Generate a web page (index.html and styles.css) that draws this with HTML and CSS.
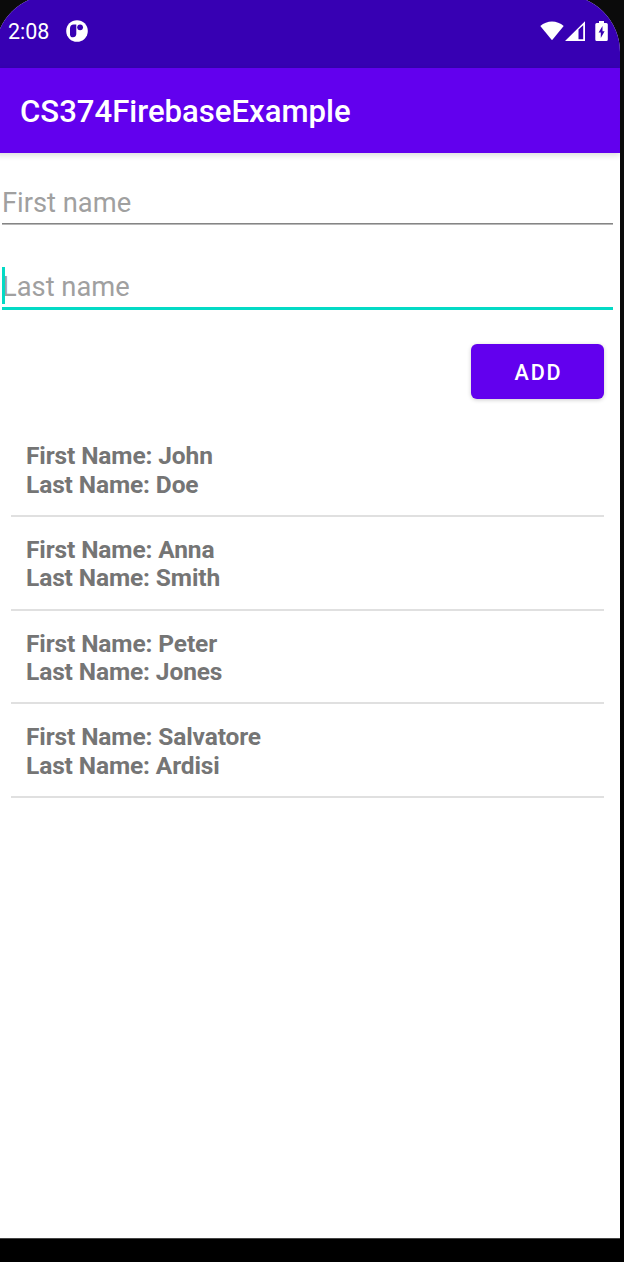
FILE: index.html
```html
<!DOCTYPE html>
<html lang="en">
<head>
<meta charset="utf-8">
<title>CS374FirebaseExample</title>
<link rel="stylesheet" href="styles.css">
</head>
<body>
<main class="screen">
  <header class="status-bar">
    <span class="clock">2:08</span>
    <svg class="notification" width="22" height="22" viewBox="0 0 22 22">
      <circle cx="11" cy="11" r="10.8" fill="#fff"/>
      <path d="M10.3 4.6H7.8Q4 4.8 4 8.5V14.4Q4.2 17.3 7 17.3Q10.3 17.1 10.3 14Z" fill="#3700b3"/>
      <circle cx="14.1" cy="7.3" r="2.9" fill="#3700b3"/>
    </svg>
    <div class="system-icons">
      <svg width="24" height="20" viewBox="0 0 24 20"><path d="M0.3 5C7-1.1 17-1.1 23.7 5L12 19.2Z" fill="#fff"/></svg>
      <svg class="signal" width="20" height="20" viewBox="0 0 20 20"><path fill-rule="evenodd" d="M0 20L20 0.2V20ZM13.5 8.5V18.2H18.2V4.2Z" fill="#fff"/></svg>
      <svg class="battery" width="13" height="20" viewBox="0 0 13 20"><path fill-rule="evenodd" d="M4 0H9V2H11.3Q12.8 2 12.8 3.5V18.5Q12.8 20 11.3 20H1.7Q.3 20 .3 18.5V3.5Q.3 2 1.7 2H4ZM7.5 5L3.6 11.6H5.8V17L9.6 10.2H7.5Z" fill="#fff"/></svg>
    </div>
  </header>
  <h1 class="app-bar">CS374FirebaseExample</h1>
  <form class="form">
    <label class="field">First name</label>
    <label class="field focused">Last name<span class="caret"></span></label>
    <button class="add" type="button">ADD</button>
  </form>
  <ul class="people">
    <li>First Name: John<br>Last Name: Doe</li>
    <li>First Name: Anna<br>Last Name: Smith</li>
    <li>First Name: Peter<br>Last Name: Jones</li>
    <li>First Name: Salvatore<br>Last Name: Ardisi</li>
  </ul>
</main>
</body>
</html>
```
FILE: styles.css
```css
* { box-sizing: border-box; }

body {
  margin: 0;
  height: 1262px;
  background: linear-gradient(#0b0b0b 400px, #000 900px);
  font-family: Roboto, "Liberation Sans", sans-serif;
  overflow: hidden;
}

.screen {
  width: 625px;
  height: 1244px;
  margin: -5px 0 0 -5px;
  padding-left: 5px;
  background: #fff;
  border-bottom: 1px solid #444;
  border-radius: 57px 57px 0 0;
  overflow: hidden;
}

.status-bar {
  display: flex;
  align-items: center;
  height: 73px;
  margin-left: -5px;
  padding: 0 12px 2px 13px;
  background: #3700b3;
  color: #fff;
}

.clock {
  width: 58px;
  padding-top: 2px;
  font-size: 21.5px;
  line-height: 26px;
}

.status-bar svg { display: block; }

.system-icons {
  display: flex;
  margin-left: auto;
}

.signal { margin-left: 1px; }
.battery { margin-left: 10px; }

.app-bar {
  position: relative;
  height: 85px;
  margin: 0 0 0 -5px;
  padding: 2px 0 0 25px;
  background: #6200ee;
  box-shadow: 0 2px 6px rgba(0, 0, 0, .15);
  color: #fff;
  font-size: 31.1px;
  font-weight: 500;
  line-height: 84px;
}

.form {
  display: flex;
  flex-direction: column;
  padding: 31px 7px 0 2px;
}

.field {
  position: relative;
  height: 41px;
  border-bottom: 1px solid #b8b8b8;
  box-shadow: inset 0 -1px #858585;
  color: #a0a0a0;
  font-size: 27.3px;
  line-height: 38px;
}

.focused {
  height: 43px;
  margin-top: 42px;
  border-bottom: 3px solid #03dac5;
  box-shadow: none;
  line-height: 40px;
}

.caret {
  position: absolute;
  left: 0;
  top: 0;
  width: 3px;
  height: 37px;
  background: #03dac5;
}

.add {
  align-self: flex-end;
  width: 133px;
  height: 55px;
  margin: 34px 9px 0 0;
  padding: 2px 0 0 2px;
  border: 0;
  border-radius: 6px;
  background: #6200ee;
  box-shadow: 0 1px 4px rgba(0, 0, 0, .2);
  color: #fff;
  font: 500 21.5px/26px Roboto, sans-serif;
  letter-spacing: 1.9px;
}

.people {
  margin: 24px 16px 0 11px;
  padding: 0;
  list-style: none;
}

.people li {
  height: 93.75px;
  padding: 19px 15px 0;
  border-bottom: 2px solid #e0e0e0;
  color: #757575;
  font-size: 24.5px;
  font-weight: 700;
  line-height: 28.7px;
  letter-spacing: -.12px;
}
```
